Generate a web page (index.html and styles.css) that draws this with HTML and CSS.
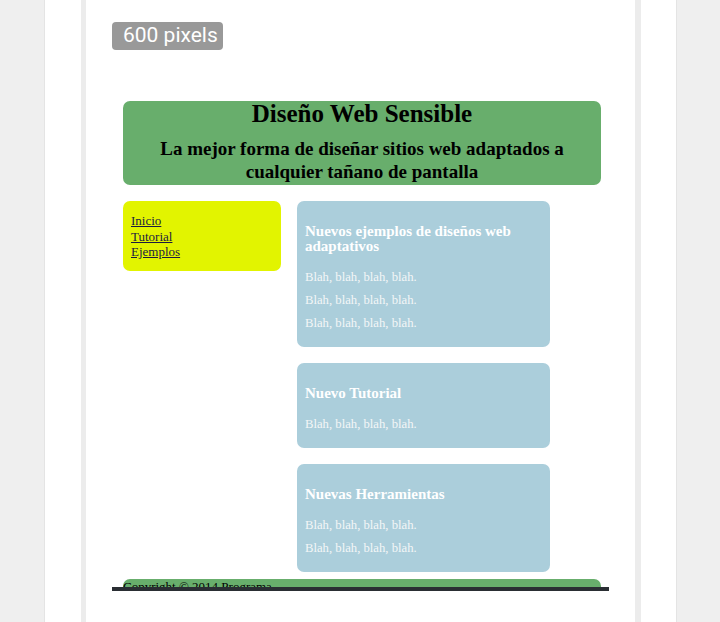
FILE: index.html
```html
<!DOCTYPE html>
<html lang="es">
<head>
  <meta charset="UTF-8" />
  <meta name="viewport" content="width=device-width, initial-scale=1.0" />
  <title>600 pixels</title>
  <link rel="stylesheet" href="styles.css">
</head>
<body>
  <div class="sheet">
    <div class="frame">
      <span class="badge">600 pixels</span>

      <!-- captura de la pagina a 600px -->
      <div class="shot">
        <header class="site-header">
          <h1>Diseño Web Sensible</h1>
          <h2>La mejor forma de diseñar sitios web adaptados a cualquier tañano de pantalla</h2>
        </header>

        <div class="site-main">
          <nav class="site-nav">
            <a href="#">Inicio</a>
            <a href="#">Tutorial</a>
            <a href="#">Ejemplos</a>
          </nav>

          <div class="articles">
            <article class="post">
              <h3>Nuevos ejemplos de diseños web adaptativos</h3>
              <p>Blah, blah, blah, blah.</p>
              <p>Blah, blah, blah, blah.</p>
              <p>Blah, blah, blah, blah.</p>
            </article>
            <article class="post">
              <h3>Nuevo Tutorial</h3>
              <p>Blah, blah, blah, blah.</p>
            </article>
            <article class="post">
              <h3>Nuevas Herramientas</h3>
              <p>Blah, blah, blah, blah.</p>
              <p>Blah, blah, blah, blah.</p>
            </article>
          </div>
        </div>

        <footer class="site-footer">Copyright © 2014 Programa</footer>
      </div>
    </div>
  </div>
</body>
</html>
```

FILE: styles.css
```css
body {
  margin: 0;
  background-color: #efefef;
  font-family: "Liberation Serif", "Times New Roman", serif;
  height: 622px;
  overflow: hidden;
}
.sheet {
  margin-left: 44px;
  width: 631px;
  height: 622px;
  background-color: #fff;
  border-left: 1px solid #e4e4e4;
  border-right: 1px solid #e4e4e4;
}
.frame {
  margin-left: 36px;
  width: 523px;
  height: 622px;
  padding-left: 26px;
  border-left: 5px solid #ececec;
  border-right: 6px solid #ececec;
  background-color: #fff;
}
.badge {
  display: inline-block;
  margin-top: 22px;
  height: 28px;
  line-height: 27px;
  padding: 0 5px 0 11px;
  background-color: #999;
  color: #fff;
  border-radius: 4px;
  font-family: Roboto, "Liberation Sans", sans-serif;
  font-size: 21px;
}
.shot {
  margin-top: 51px;
  width: 478px;
  height: 486px;
  padding: 0 8px 0 11px;
  overflow: hidden;
  border-bottom: 4px solid #2a2e33;
  display: flex;
  flex-direction: column;
  gap: 16px;
}
.site-header {
  background-color: #68ae6c;
  border-radius: 7px;
  text-align: center;
  padding-bottom: 2px;
  flex-shrink: 0;
}
.site-header h1 {
  margin: 0;
  font-size: 25px;
  line-height: 26px;
}
.site-header h2 {
  margin: 10px 0 0;
  font-size: 19px;
  line-height: 23px;
}
.site-main {
  display: flex;
  gap: 16px;
  align-items: flex-start;
  flex-shrink: 0;
}
.site-nav {
  width: 142px;
  height: 47px;
  padding: 12px 8px 11px;
  background-color: #e2f400;
  border-radius: 7px;
  display: flex;
  flex-direction: column;
}
.site-nav a {
  color: #1c1c40;
  font-size: 13px;
  line-height: 15.5px;
}
.articles {
  display: flex;
  flex-direction: column;
  gap: 16px;
}
.post {
  width: 237px;
  padding: 23px 8px 12px;
  background-color: #abcedb;
  border-radius: 7px;
  color: #f3f6f7;
}
.post h3 {
  margin: 0 0 12px;
  font-size: 15px;
  line-height: 15px;
  color: #fff;
}
.post p {
  margin: 0;
  font-size: 12.7px;
  line-height: 23px;
}
.site-footer {
  margin-top: -9px;
  flex-shrink: 0;
  background-color: #68ae6c;
  border-radius: 7px 7px 0 0;
  font-size: 13px;
  line-height: 15px;
  height: 30px;
}
```
